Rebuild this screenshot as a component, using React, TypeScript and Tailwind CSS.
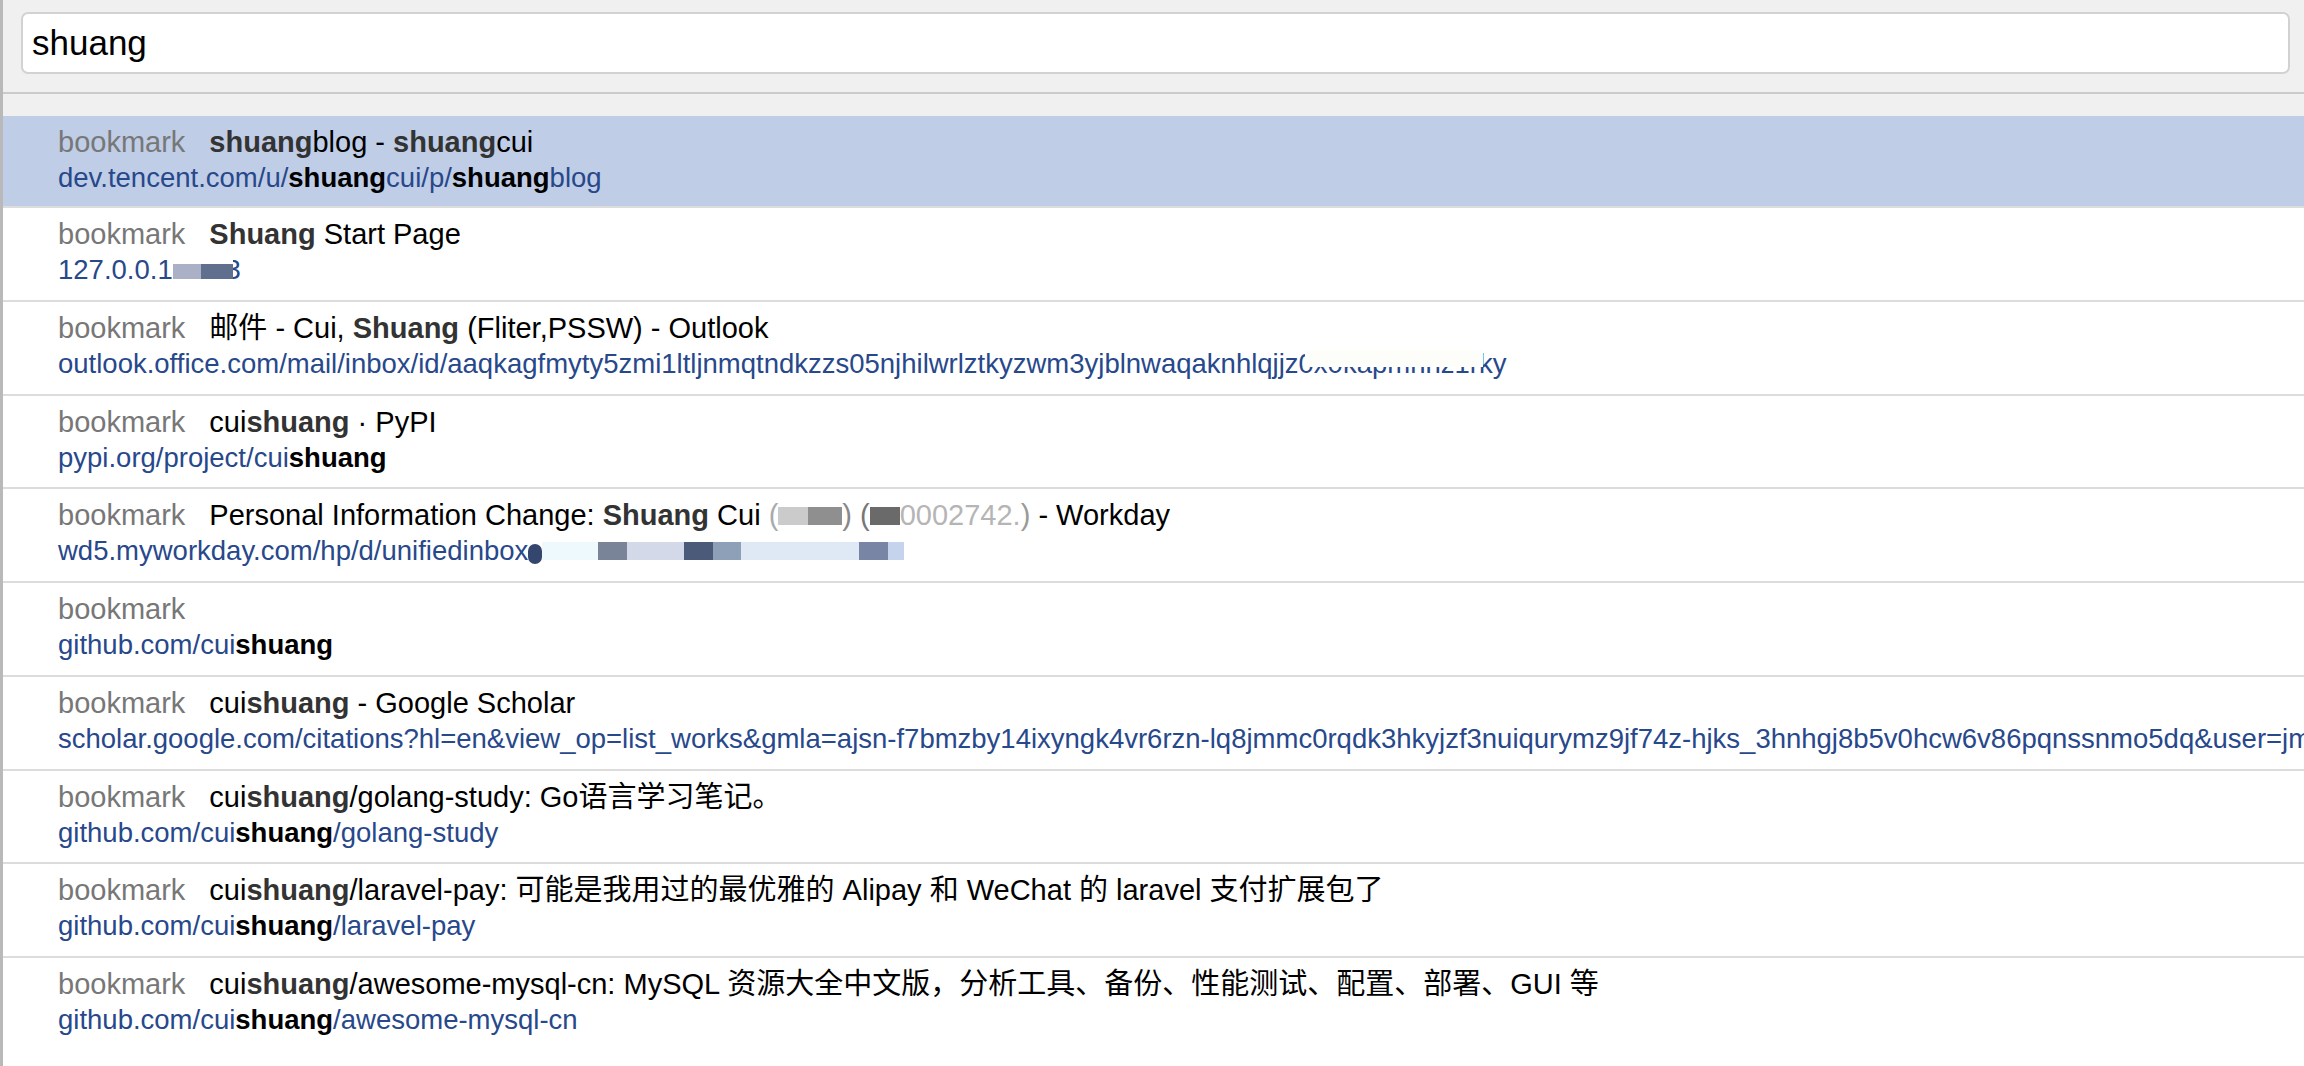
import React from 'react';

type Seg = { t: string; b?: boolean };

const FONT = "font-['Liberation_Sans','Noto_Sans_CJK_SC',sans-serif]";

// blurred bits of the screenshot, drawn as flat blocks
function Blot({ w, h = 16, c }: { w: number; h?: number; c: string }) {
  return <span className="inline-block align-baseline" style={{ width: w, height: h, background: c }} />;
}

function Title({ segs }: { segs: Seg[] }) {
  return (
    <>
      {segs.map((s, i) =>
        s.b ? (
          <span key={i} className="font-bold text-[#333]">
            {s.t}
          </span>
        ) : (
          <span key={i}>{s.t}</span>
        )
      )}
    </>
  );
}

function Url({ segs }: { segs: Seg[] }) {
  return (
    <>
      {segs.map((s, i) =>
        s.b ? (
          <span key={i} className="font-bold text-black">
            {s.t}
          </span>
        ) : (
          <span key={i}>{s.t}</span>
        )
      )}
    </>
  );
}

const rows: { title: React.ReactNode; url: React.ReactNode }[] = [
  {
    title: <Title segs={[{ t: 'shuang', b: true }, { t: 'blog - ' }, { t: 'shuang', b: true }, { t: 'cui' }]} />,
    url: <Url segs={[{ t: 'dev.tencent.com/u/' }, { t: 'shuang', b: true }, { t: 'cui/p/' }, { t: 'shuang', b: true }, { t: 'blog' }]} />,
  },
  {
    title: <Title segs={[{ t: 'Shuang', b: true }, { t: ' Start Page' }]} />,
    url: (
      <>
        127.0.0.1
        <Blot w={28} h={15} c="#aab1c7" />
        <Blot w={32} h={15} c="#5f6f8d" />
        <span className="inline-flex justify-end w-[8px] overflow-hidden align-bottom">3</span>
      </>
    ),
  },
  {
    title: <Title segs={[{ t: '邮件 - Cui, ' }, { t: 'Shuang', b: true }, { t: ' (Fliter,PSSW) - Outlook' }]} />,
    url: (
      <>
        outlook.office.com/mail/inbox/id/aaqkagfmyty5zmi1ltljnmqtndkzzs05njhilwrlztkyzwm3yjblnwaqaknhlqjjz
        <span className="relative">
          0x0kapmhhz1r
          <span className="absolute left-[6px] right-[-4px] top-[2px] h-[17px] bg-[#fdfef9]" />
        </span>
        ky
      </>
    ),
  },
  {
    title: <Title segs={[{ t: 'cui' }, { t: 'shuang', b: true }, { t: ' · PyPI' }]} />,
    url: <Url segs={[{ t: 'pypi.org/project/cui' }, { t: 'shuang', b: true }]} />,
  },
  {
    title: (
      <>
        <Title segs={[{ t: 'Personal Information Change: ' }, { t: 'Shuang', b: true }, { t: ' Cui ' }]} />
        <span className="text-[#aaa]"> (</span>
        <Blot w={30} h={18} c="#cbcbcb" />
        <Blot w={34} h={18} c="#8f8f8f" />
        <span className="text-[#888]">) </span>
        <span className="text-[#777]"> (</span>
        <Blot w={30} h={18} c="#6a6a6a" />
        <span className="text-[#b5b5b5]">0002742.</span>
        <span className="text-[#999]">) </span>
        <span>- Workday</span>
      </>
    ),
    url: (
      <>
        wd5.myworkday.com/hp/d/unifiedinbox
        <span className="inline-block w-[14px] h-[20px] rounded-full bg-[#34466e] align-[-4px]" />
        <Blot w={56} h={18} c="#eef9fd" />
        <Blot w={29} h={18} c="#7a8499" />
        <Blot w={57} h={18} c="#d3d9e8" />
        <Blot w={29} h={18} c="#4b5a78" />
        <Blot w={28} h={18} c="#8ea0b8" />
        <Blot w={118} h={18} c="#dfe8f5" />
        <Blot w={29} h={18} c="#7885a5" />
        <Blot w={16} h={18} c="#c6d3ec" />
      </>
    ),
  },
  {
    title: null,
    url: <Url segs={[{ t: 'github.com/cui' }, { t: 'shuang', b: true }]} />,
  },
  {
    title: <Title segs={[{ t: 'cui' }, { t: 'shuang', b: true }, { t: ' - Google Scholar' }]} />,
    url: (
      <Url
        segs={[
          {
            t: 'scholar.google.com/citations?hl=en&view_op=list_works&gmla=ajsn-f7bmzby14ixyngk4vr6rzn-lq8jmmc0rqdk3hkyjzf3nuiqurymz9jf74z-hjks_3hnhgj8b5v0hcw6v86pqnssnmo5dq&user=jmKQ3d4AAAAJ',
          },
        ]}
      />
    ),
  },
  {
    title: <Title segs={[{ t: 'cui' }, { t: 'shuang', b: true }, { t: '/golang-study: Go语言学习笔记。' }]} />,
    url: <Url segs={[{ t: 'github.com/cui' }, { t: 'shuang', b: true }, { t: '/golang-study' }]} />,
  },
  {
    title: (
      <Title
        segs={[
          { t: 'cui' },
          { t: 'shuang', b: true },
          { t: '/laravel-pay: 可能是我用过的最优雅的 Alipay 和 WeChat 的 laravel 支付扩展包了' },
        ]}
      />
    ),
    url: <Url segs={[{ t: 'github.com/cui' }, { t: 'shuang', b: true }, { t: '/laravel-pay' }]} />,
  },
  {
    title: (
      <Title
        segs={[
          { t: 'cui' },
          { t: 'shuang', b: true },
          { t: '/awesome-mysql-cn: MySQL 资源大全中文版，分析工具、备份、性能测试、配置、部署、GUI 等' },
        ]}
      />
    ),
    url: <Url segs={[{ t: 'github.com/cui' }, { t: 'shuang', b: true }, { t: '/awesome-mysql-cn' }]} />,
  },
];

export default function App() {
  return (
    <div className={`min-h-screen h-[1066px] overflow-hidden bg-white border-l-[3px] border-[#b9b9b9] ${FONT}`}>
      {/* search field */}
      <div className="h-[94px] bg-[#f0f0f0] border-b-2 border-[#cbcbcb] pt-[12px] pl-[18px] pr-[14px]">
        <div className="h-[62px] bg-white border-2 border-[#d2d2d2] rounded-[7px] pl-[9px] flex items-center text-[35px] text-black">
          shuang
        </div>
      </div>

      <div className="h-[22px] bg-[#f0f0f0]" />

      {/* results */}
      <div>
        {rows.map((r, i) => (
          <div
            key={i}
            className={`${i === 0 ? 'h-[92px] bg-[#bfcde6]' : 'h-[93.75px] bg-white'} ${i === rows.length - 1 ? '' : 'border-b-2 border-[#dcdcdc]'} pl-[55px] pt-[9px] whitespace-nowrap overflow-hidden`}
          >
            <div className="h-[35px] leading-[35px] text-[29px] text-black">
              <span className="text-[#777] mr-[24px]">bookmark</span>
              {r.title}
            </div>
            <div className="h-[35px] leading-[35px] text-[27.5px] text-[#27488b]">{r.url}</div>
          </div>
        ))}
      </div>
    </div>
  );
}
